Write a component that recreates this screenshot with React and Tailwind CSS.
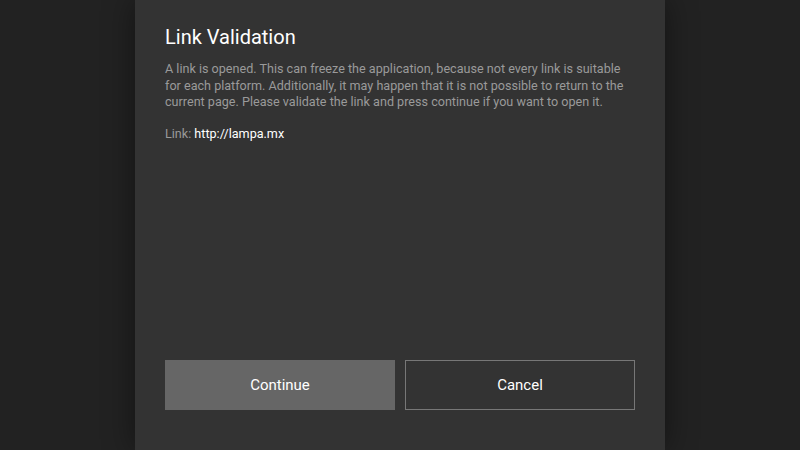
export default function App() {
  return (
    <div className="w-[800px] h-[450px] bg-[#222222] flex justify-center overflow-hidden" style={{ fontFamily: "Roboto, 'Noto Sans', sans-serif" }}>
      <div className="w-[530px] h-full bg-[#333333] shadow-[0_0_30px_rgba(0,0,0,0.45)] px-[30px] pt-[25px] pb-[40px] flex flex-col">
        <div className="text-[20px] leading-[24px] text-white">Link Validation</div>
        <div className="mt-[12px] text-[12.6px] leading-[16.5px] text-[#9a9a9a]">
          A link is opened. This can freeze the application, because not every link is suitable for each platform. Additionally, it may happen that it is not possible to return to the current page. Please validate the link and press continue if you want to open it.
        </div>
        <div className="mt-[15px] text-[12.6px] leading-[16px] text-[#9a9a9a]">
          Link: <span className="text-white">http://lampa.mx</span>
        </div>
        <div className="flex-1" />
        <div className="flex gap-[10px]">
          <div className="w-[230px] h-[50px] bg-[#666666] flex items-center justify-center text-[15px] text-white">Continue</div>
          <div className="w-[230px] h-[50px] border border-[#777777] flex items-center justify-center text-[15px] text-white">Cancel</div>
        </div>
      </div>
    </div>
  );
}
